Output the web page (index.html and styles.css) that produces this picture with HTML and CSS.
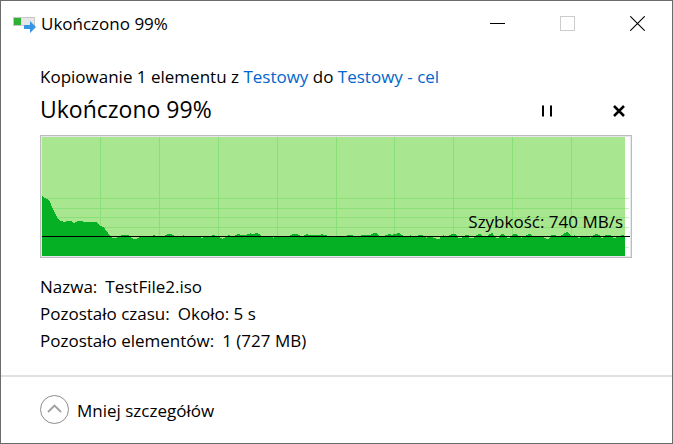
FILE: index.html
```html
<!DOCTYPE html>
<html lang="pl">
<head>
<meta charset="utf-8">
<meta name="viewport" content="width=device-width, initial-scale=1">
<title>Ukończono 99%</title>
<link rel="stylesheet" href="styles.css">
</head>
<body>
<div class="window">
  <header class="titlebar">
    <svg class="app-icon" width="24" height="18" viewBox="0 0 24 18" aria-hidden="true">
      <rect x="0.5" y="1.5" width="21" height="8" fill="#e6e6e6" stroke="#c8c8c8"/>
      <rect x="1" y="2" width="7" height="7" fill="#2fb135"/>
      <path d="M11 9h6V5l6 6-6 6v-4h-6z" fill="#3895e6"/>
    </svg>
    <span class="caption">Ukończono 99%</span>
    <div class="window-buttons">
      <button type="button" aria-label="Minimalizuj"><svg width="15" height="15" viewBox="0 0 15 15"><path d="M0 7.5h15" stroke="#000"/></svg></button>
      <button type="button" aria-label="Maksymalizuj" disabled><svg width="15" height="15" viewBox="0 0 15 15"><rect x="0.5" y="0.5" width="14" height="14" fill="none" stroke="#ccc"/></svg></button>
      <button type="button" aria-label="Zamknij"><svg width="15" height="15" viewBox="0 0 15 15"><path d="M0.3 0.3l14.4 14.4M14.7 0.3L0.3 14.7" stroke="#000" stroke-width="1.1"/></svg></button>
    </div>
  </header>

  <main class="content">
    <p class="summary">Kopiowanie 1 elementu z <a href="#source">Testowy</a> do <a href="#target">Testowy - cel</a></p>
    <div class="status">
      <h1>Ukończono 99%</h1>
      <div class="actions">
        <button type="button" aria-label="Wstrzymaj"><svg width="12" height="12" viewBox="0 0 12 12"><path d="M2 0.5v11M10 0.5v11" stroke="#000" stroke-width="2"/></svg></button>
        <button type="button" aria-label="Anuluj"><svg width="12" height="12" viewBox="0 0 12 12"><path d="M1 1l10 10M11 1L1 11" stroke="#000" stroke-width="2.5"/></svg></button>
      </div>
    </div>

    <div class="chart">
      <svg viewBox="0 0 588 119" preserveAspectRatio="none" shape-rendering="crispEdges" role="img" aria-label="Wykres szybkości kopiowania">
        <rect width="588" height="119" fill="#fff"/>
        <path d="M583 61.5h4M583 71.5h4M583 80.5h4M583 90.5h4M583 110.5h4" stroke="#c9efc6"/>
        <rect width="583" height="119" fill="#a8e690"/>
        <path d="M58.5 0v99M117.5 0v99M176.5 0v99M235.5 0v99M294.5 0v99M352.5 0v99M411.5 0v99M470.5 0v99M529.5 0v99M0 61.5h583M0 71.5h583M0 80.5h583M0 90.5h583" stroke="#8adf79"/>
        <path d="M0 59L2 61 5 62 8 65 10 70 13 76 16 82 19 84 22 85 25 84 29 84 32 86 36 84 40 84 41 85 54 85 57 88 61 90 63 92 66 96 69 100H583V119H0Z" fill="#06b025"/>
        <path d="M79 98.5h8M111 98.5h2M123 98.5h9M125 97.5h5M141 98.5h1M170 98.5h3M186 98.5h2M193 98.5h26M195 97.5h3M205 97.5h13M208 96.5h1M213 96.5h3M248 98.5h10M250 97.5h6M262 98.5h23M264 97.5h2M279 97.5h2M305 98.5h6M319 98.5h18M329 97.5h7M331 96.5h4M343 98.5h18M346 97.5h3M351 97.5h8M355 96.5h3M368 98.5h1M376 98.5h5M401 98.5h1M407 98.5h8M409 97.5h5M423 98.5h4M434 98.5h6M436 97.5h3M446 98.5h6M447 97.5h4M449 96.5h2M458 98.5h5M459 97.5h3M470 98.5h6M471 97.5h4M484 98.5h6M486 97.5h3M509 98.5h5M519 98.5h10M521 97.5h7M522 96.5h5M524 95.5h2M532 98.5h1M551 98.5h7M553 97.5h3M563 98.5h6M579 98.5h3" stroke="#06b025"/>
        <path d="M70 100.5h5M89 100.5h8M91 101.5h4M159 100.5h2M178 100.5h5M180 101.5h1M231 100.5h1M384 100.5h1M391 100.5h7M394 101.5h4M416 100.5h4M427 100.5h5M454 100.5h3M465 100.5h3M479 100.5h1M502 100.5h6M504 101.5h3M536 100.5h2M548 100.5h1M559 100.5h2M571 100.5h3" stroke="#a8e690"/>
        <path d="M0 99.5h588" stroke="#000"/>
      </svg>
      <span class="speed">Szybkość: 740 MB/s</span>
    </div>

    <dl class="details">
      <div><dt>Nazwa:</dt><dd>TestFile2.iso</dd></div>
      <div><dt>Pozostało czasu:</dt><dd>Około: 5 s</dd></div>
      <div><dt>Pozostało elementów:</dt><dd>1 (727 MB)</dd></div>
    </dl>
  </main>

  <footer class="footer">
    <button type="button" class="toggle" aria-expanded="true">
      <svg width="30" height="30" viewBox="0 0 30 30" fill="none" aria-hidden="true">
        <circle cx="15.5" cy="14.5" r="14" stroke="#8c8c8c"/>
        <path d="M9 17l6.5-6.5 6.5 6.5" stroke="#a0a0a0" stroke-width="1.8"/>
      </svg>
      <span>Mniej szczegółów</span>
    </button>
  </footer>
</div>
</body>
</html>
```
FILE: styles.css
```css
* {
  box-sizing: border-box;
}

body {
  margin: 0;
  font-family: "Open Sans", "Noto Sans", sans-serif;
  font-size: 17px;
  line-height: 27px;
  color: #000;
  background: #fff;
}

h1, p, dl, dd {
  margin: 0;
}

button {
  display: flex;
  align-items: center;
  justify-content: center;
  padding: 0;
  border: 0;
  background: transparent;
  font: inherit;
  color: inherit;
}

svg {
  display: block;
}

.window {
  display: flex;
  flex-direction: column;
  min-height: 100vh;
  border: 1px solid #6b6b6b;
}

.titlebar {
  display: flex;
  align-items: center;
  height: 44px;
  padding-left: 12px;
}

.app-icon {
  margin-top: 4px;
}

.caption {
  margin-left: 4px;
}

.window-buttons {
  display: flex;
  align-self: stretch;
  margin-left: auto;
}

.window-buttons button {
  width: 70px;
}

.content {
  flex: 1;
  padding: 18px 40px 0 39px;
}

.summary a {
  color: #0066cc;
  text-decoration: none;
}

.status {
  display: flex;
  align-items: flex-end;
  justify-content: space-between;
  height: 39px;
}

h1 {
  font-size: 23px;
  font-weight: 400;
  line-height: 40px;
}

.actions {
  display: flex;
  gap: 36px;
}

.actions button {
  width: 36px;
  height: 36px;
}

.actions button:last-child {
  margin-right: -5px;
}

.chart {
  position: relative;
  margin-top: 6px;
  border: 1px solid #bcbcbc;
  padding: 1px;
  background: #e6e6ee;
}

.chart svg {
  width: 100%;
  height: 119px;
}

.speed {
  position: absolute;
  right: 8px;
  bottom: 22px;
}

.details {
  margin-top: 15px;
}

.details div {
  display: flex;
  gap: 8px;
}

.footer {
  padding: 18px 38px;
  border-top: 2px solid #e1e1e1;
}

.toggle {
  gap: 8px;
}
```
